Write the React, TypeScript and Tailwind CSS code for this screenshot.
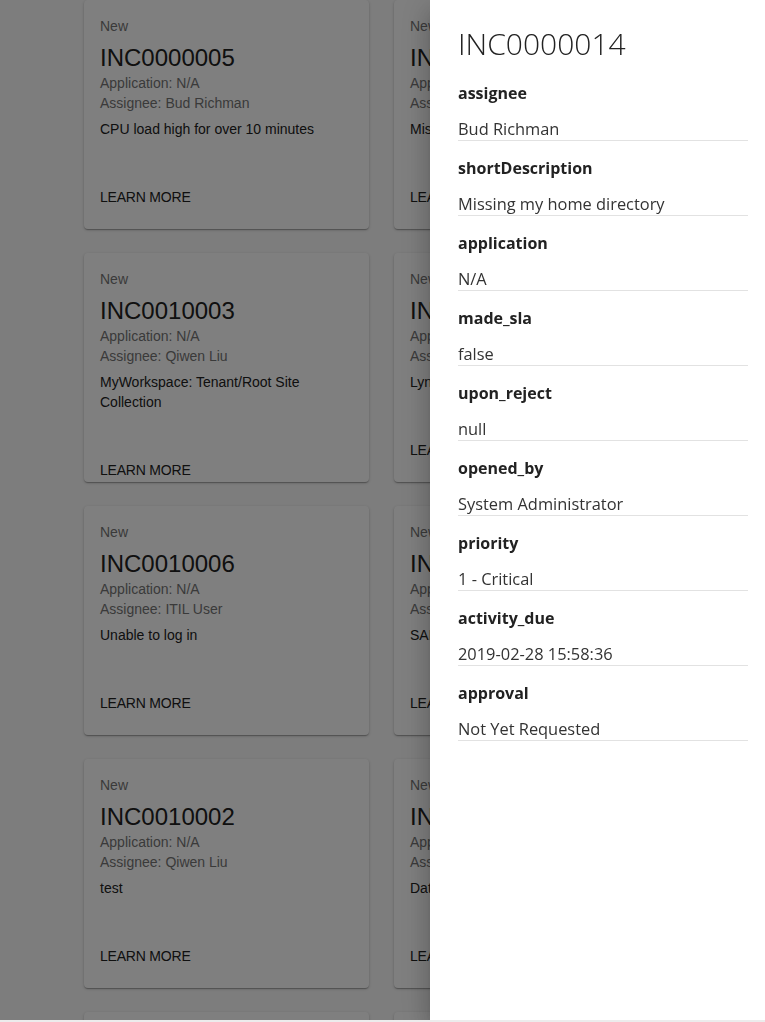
import React from 'react';

type Incident = {
    number: string;
    state: string;
    application: string;
    assignee: string;
    description: string;
};

// Cards in the grid behind the drawer (left column, right column)
const rows: Incident[][] = [
    [
        { number: 'INC0000005', state: 'New', application: 'N/A', assignee: 'Bud Richman', description: 'CPU load high for over 10 minutes' },
        { number: 'INC0000014', state: 'New', application: 'N/A', assignee: 'Bud Richman', description: 'Missing my home directory' },
    ],
    [
        { number: 'INC0010003', state: 'New', application: 'N/A', assignee: 'Qiwen Liu', description: 'MyWorkspace: Tenant/Root Site Collection' },
        { number: 'INC0010004', state: 'New', application: 'N/A', assignee: 'Qiwen Liu', description: 'Lync login fails' },
    ],
    [
        { number: 'INC0010006', state: 'New', application: 'N/A', assignee: 'ITIL User', description: 'Unable to log in' },
        { number: 'INC0010007', state: 'New', application: 'N/A', assignee: 'ITIL User', description: 'SAP app not responding' },
    ],
    [
        { number: 'INC0010002', state: 'New', application: 'N/A', assignee: 'Qiwen Liu', description: 'test' },
        { number: 'INC0010001', state: 'New', application: 'N/A', assignee: 'Qiwen Liu', description: 'Database is slow' },
    ],
    [
        { number: 'INC0010008', state: 'New', application: 'N/A', assignee: 'Bud Richman', description: 'Printer offline' },
        { number: 'INC0010009', state: 'New', application: 'N/A', assignee: 'Bud Richman', description: 'Email not syncing' },
    ],
];

const details: { label: string; value: string }[] = [
    { label: 'assignee', value: 'Bud Richman' },
    { label: 'shortDescription', value: 'Missing my home directory' },
    { label: 'application', value: 'N/A' },
    { label: 'made_sla', value: 'false' },
    { label: 'upon_reject', value: 'null' },
    { label: 'opened_by', value: 'System Administrator' },
    { label: 'priority', value: '1 - Critical' },
    { label: 'activity_due', value: '2019-02-28 15:58:36' },
    { label: 'approval', value: 'Not Yet Requested' },
];

function IncidentCard({ incident }: { incident: Incident }) {
    return (
        <div className="h-[229px] overflow-hidden rounded bg-white shadow-[0_1px_3px_rgba(0,0,0,0.2),0_1px_1px_rgba(0,0,0,0.14),0_2px_1px_-1px_rgba(0,0,0,0.12)]">
            <div className="px-4 pt-4">
                <div className="text-[14px] leading-[20px] text-[#757575]">{incident.state}</div>
                <div className="mt-[6px] text-[24px] leading-[32px] text-[#212121]">{incident.number}</div>
                <div className="-mt-px text-[14px] leading-[20px] text-[#757575]">Application: {incident.application}</div>
                <div className="text-[14px] leading-[20px] text-[#757575]">Assignee: {incident.assignee}</div>
                <div className="mt-[6px] text-[14px] leading-[20px] text-[#212121]">{incident.description}</div>
            </div>
            <div className="mt-[48px] px-4 text-[14px] leading-[20px] tracking-[-0.2px] uppercase text-[#212121]">Learn More</div>
        </div>
    );
}

export default function App() {
    return (
        <div className="relative h-[1022px] overflow-hidden bg-[#fafafa] font-['Liberation_Sans',Arial,sans-serif]">
            {/* Card grid */}
            <div className="grid grid-cols-[285px_285px] gap-x-[25px] gap-y-[24px] pl-[84px]">
                {rows.map((row) =>
                    row.map((incident) => (
                        <IncidentCard key={incident.number} incident={incident} />
                    ))
                )}
            </div>

            {/* Backdrop */}
            <div className="fixed left-0 right-0 top-0 h-[1020px] bg-black/50"></div>

            {/* Drawer */}
            <div className="fixed right-0 top-0 h-[1020px] w-[335px] bg-white pl-[28px] pr-[17px] pt-[26px] shadow-[0_8px_10px_-5px_rgba(0,0,0,0.2),0_16px_24px_2px_rgba(0,0,0,0.14),0_6px_30px_5px_rgba(0,0,0,0.12)] font-['Open_Sans',sans-serif]">
                <div className="text-[30px] font-light leading-[36px] text-[#222222]">INC0000014</div>
                <div className="mt-[19px]">
                    {details.map((d) => (
                        <div key={d.label} className="mb-[15px]">
                            <div className="text-[16px] font-bold leading-[24px] text-[#222222]">{d.label}</div>
                            <div className="mt-[11px] border-b border-[#e2e2e2] pt-[2px] text-[16.4px] leading-[22px] text-[#333333]">{d.value}</div>
                        </div>
                    ))}
                </div>
            </div>

            {/* Bottom strip */}
            <div className="fixed bottom-0 left-0 right-0 h-[2px] bg-[#ececec]"></div>
        </div>
    );
}
